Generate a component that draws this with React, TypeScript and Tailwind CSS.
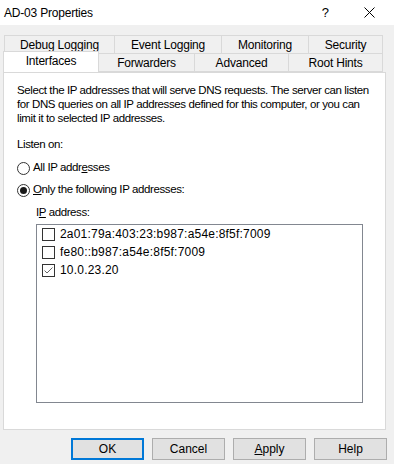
import React from 'react';

const font = "font-['Liberation_Sans',Arial,sans-serif]";
const prose = 'text-[11.5px] tracking-[-0.4px]';

/** 위쪽 탭 줄 */
const backTabs = [
    { label: 'Debug Logging', w: 'w-[111px]' },
    { label: 'Event Logging', w: 'w-[107px]' },
    { label: 'Monitoring', w: 'w-[87px]' },
    { label: 'Security', w: 'w-[74px]' },
];

const frontTabs = [
    { label: 'Forwarders', w: 'w-[96px]' },
    { label: 'Advanced', w: 'w-[94px]' },
    { label: 'Root Hints', w: 'w-[94px]' },
];

const addresses = [
    { ip: '2a01:79a:403:23:b987:a54e:8f5f:7009', checked: false },
    { ip: 'fe80::b987:a54e:8f5f:7009', checked: false },
    { ip: '10.0.23.20', checked: true },
];

function Radio({ checked }: { checked: boolean }) {
    return (
        <span className="w-[13px] h-[13px] rounded-full border border-[#333] bg-white flex items-center justify-center shrink-0">
            {checked && <span className="w-[7px] h-[7px] rounded-full bg-[#1a1a1a]" />}
        </span>
    );
}

function Check({ checked }: { checked: boolean }) {
    return (
        <span className="w-[13px] h-[13px] border border-[#333] bg-white flex items-center justify-center shrink-0">
            {checked && (
                <svg width="11" height="11" viewBox="0 0 11 11">
                    <path d="M1.5 5.5 L4 8 L9.5 2.5" fill="none" stroke="#666" strokeWidth="1" />
                </svg>
            )}
        </span>
    );
}

function Button({ children, focused }: { children: React.ReactNode; focused?: boolean }) {
    return (
        <button
            className={
                focused
                    ? 'w-[73px] h-[22px] bg-[#e1e1e1] border-2 border-[#0078d7] text-[12px] text-black flex items-center justify-center'
                    : 'w-[73px] h-[22px] bg-[#e1e1e1] border border-[#adadad] text-[12px] text-black flex items-center justify-center'
            }
        >
            {children}
        </button>
    );
}

export default function App() {
    return (
        <div className={`w-[394px] h-[464px] bg-[#f0f0f0] flex flex-col text-black text-[12px] ${font}`}>
            {/* 타이틀 바 */}
            <div className="h-[25px] bg-white flex items-center shrink-0">
                <span className="ml-[4px] text-[12px] tracking-[-0.2px]">AD-03 Properties</span>
                <span className="ml-auto mr-[35px] text-[13px]">?</span>
                <svg width="11" height="11" viewBox="0 0 11 11" className="mr-[19px]">
                    <path d="M0.5 0.5 L10.5 10.5 M10.5 0.5 L0.5 10.5" stroke="#000" strokeWidth="1" />
                </svg>
            </div>

            {/* 탭 */}
            <div className="flex flex-col pt-[10px]">
                <div className="flex ml-[4px] h-[18px]">
                    {backTabs.map((t, i) => (
                        <div
                            key={t.label}
                            className={`${t.w} border-t border-r border-[#d9d9d9] ${i === 0 ? 'border-l' : ''} flex items-center justify-center leading-none tracking-[-0.2px]`}
                        >
                            {t.label}
                        </div>
                    ))}
                </div>
                <div className="flex ml-[3px] h-[19px] relative z-10">
                    <div className="w-[96px] h-[21px] -mt-[2px] bg-white border-t border-l border-r border-[#d9d9d9] flex items-start justify-center pt-[3px] leading-none tracking-[-0.2px]">
                        Interfaces
                    </div>
                    {frontTabs.map((t) => (
                        <div
                            key={t.label}
                            className={`${t.w} border-t border-r border-b border-[#d9d9d9] flex items-center justify-center leading-none tracking-[-0.2px]`}
                        >
                            {t.label}
                        </div>
                    ))}
                </div>
            </div>

            {/* 패널 */}
            <div className="ml-[3px] w-[383px] h-[358px] bg-white border border-[#d9d9d9] flex flex-col pl-[13px] pt-[10px]">
                <p className={`leading-[14px] whitespace-nowrap ${prose}`}>
                    Select the IP addresses that will serve DNS requests. The server can listen
                    <br />
                    for DNS queries on all IP addresses defined for this computer, or you can
                    <br />
                    limit it to selected IP addresses.
                </p>
                <p className={`mt-[12px] leading-[14px] ${prose}`}>Listen on:</p>
                <div className="mt-[10px] h-[14px] flex items-center">
                    <Radio checked={false} />
                    <span className={`ml-[3px] ${prose}`}>
                        All IP addr<u>e</u>sses
                    </span>
                </div>
                <div className="mt-[8px] h-[14px] flex items-center">
                    <Radio checked={true} />
                    <span className={`ml-[3px] ${prose}`}>
                        <u>O</u>nly the following IP addresses:
                    </span>
                </div>
                <p className={`mt-[8px] ml-[19px] leading-[14px] ${prose}`}>
                    I<u>P</u> address:
                </p>
                <div className="mt-[5px] ml-[19px] w-[327px] h-[179px] border border-[#828790] flex flex-col pl-[5px]">
                    {addresses.map((a) => (
                        <div key={a.ip} className="h-[18px] flex items-center">
                            <Check checked={a.checked} />
                            <span className="ml-[5px] tracking-[0.2px]">{a.ip}</span>
                        </div>
                    ))}
                </div>
            </div>

            {/* 버튼 */}
            <div className="flex mt-[8px] ml-[71px] gap-[8px]">
                <Button focused>OK</Button>
                <Button>Cancel</Button>
                <Button>
                    <u>A</u>pply
                </Button>
                <Button>Help</Button>
            </div>
        </div>
    );
}
